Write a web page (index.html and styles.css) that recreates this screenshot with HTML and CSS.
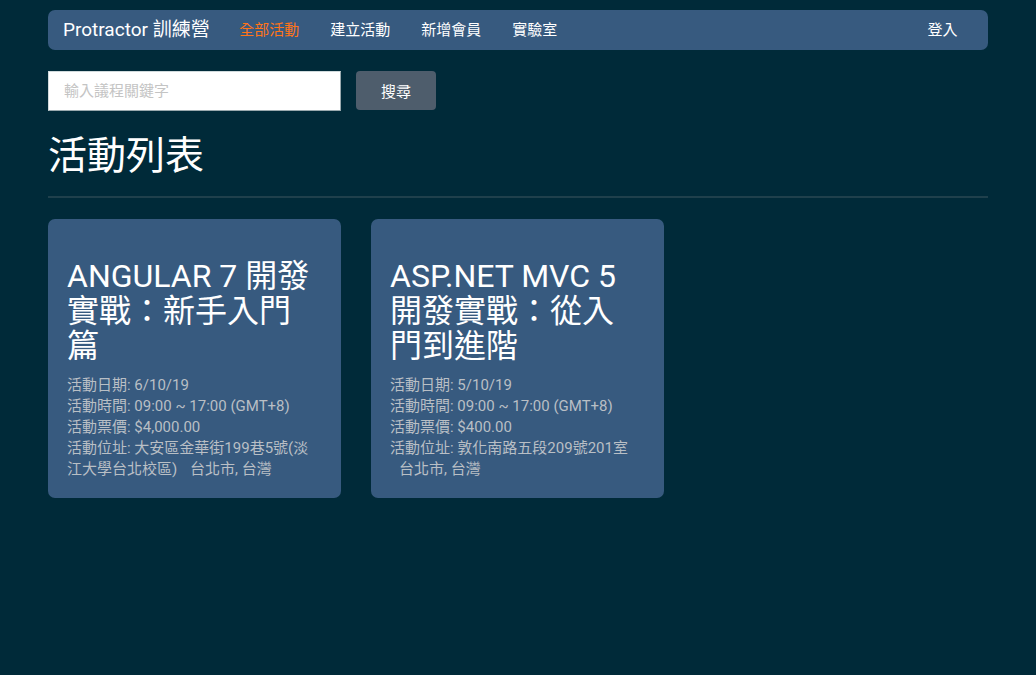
FILE: index.html
```html
<!DOCTYPE html>
<html lang="zh-Hant">
<head>
<meta charset="utf-8">
<title>Protractor 訓練營</title>
<link rel="stylesheet" href="styles.css">
</head>
<body>
<div class="container">
  <nav class="navbar">
    <a class="brand" href="#">Protractor 訓練營</a>
    <ul class="nav">
      <li><a class="active" href="#">全部活動</a></li>
      <li><a href="#">建立活動</a></li>
      <li><a href="#">新增會員</a></li>
      <li><a href="#">實驗室</a></li>
    </ul>
    <ul class="nav nav-right">
      <li><a href="#">登入</a></li>
    </ul>
  </nav>

  <form class="search">
    <input class="search-input" type="text" placeholder="輸入議程關鍵字">
    <button class="search-btn" type="button">搜尋</button>
  </form>

  <h1 class="page-title">活動列表</h1>
  <hr class="divider">

  <div class="cards">
    <div class="card">
      <h2 class="card-title">ANGULAR 7 開發實戰：新手入門篇</h2>
      <div class="card-info">
        <div>活動日期: 6/10/19</div>
        <div>活動時間: 09:00 ~ 17:00 (GMT+8)</div>
        <div>活動票價: $4,000.00</div>
        <div>活動位址: <span>大安區金華街199巷5號(淡江大學台北校區)</span> <span class="city">台北市, 台灣</span></div>
      </div>
    </div>
    <div class="card">
      <h2 class="card-title">ASP.NET MVC 5 開發實戰：從入門到進階</h2>
      <div class="card-info">
        <div>活動日期: 5/10/19</div>
        <div>活動時間: 09:00 ~ 17:00 (GMT+8)</div>
        <div>活動票價: $400.00</div>
        <div>活動位址: <span>敦化南路五段209號201室</span> <span class="city">台北市, 台灣</span></div>
      </div>
    </div>
  </div>
</div>
</body>
</html>
```

FILE: styles.css
```css
* { box-sizing: border-box; }

html, body {
  margin: 0;
  padding: 0;
}

body {
  background: #002a39;
  color: #ffffff;
  font-family: Roboto, "Noto Sans CJK TC", sans-serif;
  font-size: 15px;
  line-height: 1.42857;
}

.container {
  width: 940px;
  margin: 0 auto;
  padding-top: 10px;
}

/* Navbar */
.navbar {
  display: flex;
  align-items: center;
  height: 40px;
  background: #375a7f;
  border-radius: 7px;
  padding: 0 15px;
}

.brand {
  color: #ffffff;
  text-decoration: none;
  font-size: 19px;
  line-height: 40px;
  padding-right: 14px;
}

.nav {
  display: flex;
  list-style: none;
  margin: 0;
  padding: 0;
}

.nav a {
  display: block;
  padding: 0 15.5px;
  line-height: 40px;
  color: #ffffff;
  text-decoration: none;
  font-size: 15px;
}

.nav a.active {
  color: #ff7419;
}

.nav-right {
  margin-left: auto;
}

/* Search */
.search {
  display: flex;
  gap: 15px;
  margin-top: 21px;
}

.search-input {
  width: 293px;
  height: 40px;
  margin: 0;
  padding: 0 15px;
  background: #ffffff;
  border: 1px solid #9aa9ae;
  border-top-color: #d0dadc;
  border-left-color: #d0dadc;
  border-radius: 0;
  font-family: Roboto, "Noto Sans CJK TC", sans-serif;
  font-size: 15px;
  color: #333;
  outline: none;
}

.search-input::placeholder {
  color: #c4c4c4;
}

.search-btn {
  width: 80px;
  height: 39px;
  background: #4e5d6c;
  border: none;
  border-radius: 4px;
  color: #ffffff;
  font-family: Roboto, "Noto Sans CJK TC", sans-serif;
  font-size: 15px;
  padding: 0;
}

/* Heading */
.page-title {
  margin: 24px 0 0;
  font-size: 39px;
  font-weight: 400;
  line-height: 1.1;
}

.divider {
  margin: 18px 0 21px;
  border: 0;
  height: 2px;
  background: #1f404c;
}

/* Cards */
.cards {
  display: flex;
  gap: 30px;
}

.card {
  width: 293px;
  background: #375a7f;
  border-radius: 7px;
  padding: 19px 19px 18px;
}

.card-title {
  margin: 21px 0 11px;
  font-size: 32px;
  font-weight: 400;
  line-height: 1.1;
  color: #ffffff;
}

.card-info {
  color: #b9bfc5;
  font-size: 15px;
  line-height: 21px;
}

.city {
  margin-left: 9px;
}
```
